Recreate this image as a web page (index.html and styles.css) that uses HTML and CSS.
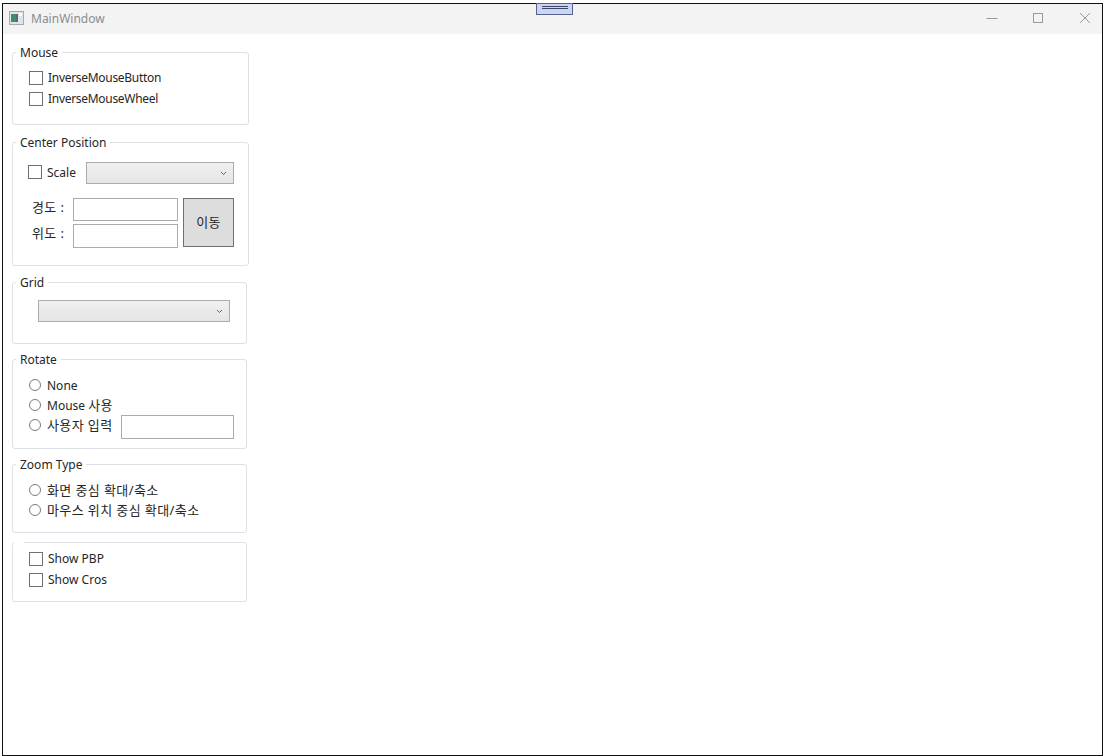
FILE: index.html
```html
<!DOCTYPE html>
<html lang="ko">
<head>
<meta charset="utf-8">
<title>MainWindow</title>
<link rel="stylesheet" href="styles.css">
</head>
<body>
<div class="window">
  <header class="titlebar">
    <svg class="app-icon" width="15" height="14" viewBox="0 0 15 14"><rect x="0.5" y="0.5" width="14" height="13" fill="#dfe5e8" stroke="#a3abae"/><rect x="2" y="3" width="5" height="8" fill="#3f8a70"/><rect x="7" y="3" width="2" height="8" fill="#5a6a70"/><rect x="10" y="2" width="3" height="3" fill="#fff"/></svg>
    <span class="title">MainWindow</span>
    <div class="controls">
      <svg class="ctl-min" width="12" height="12" viewBox="0 0 12 12"><path d="M0.5 6.5H11.5" stroke="#9a9a9a" fill="none"/></svg>
      <svg width="12" height="12" viewBox="0 0 12 12"><rect x="1.5" y="1.5" width="9" height="9" stroke="#9a9a9a" fill="none"/></svg>
      <svg width="12" height="12" viewBox="0 0 12 12"><path d="M1 1L11 11M11 1L1 11" stroke="#9a9a9a" fill="none"/></svg>
    </div>
  </header>
  <div class="debug-bar"><span></span><span></span></div>
  <main class="sidebar">
    <fieldset class="group g-mouse">
      <legend>Mouse</legend>
      <label class="row check-row tight"><span class="check"></span>InverseMouseButton</label>
      <label class="row check-row tight"><span class="check"></span>InverseMouseWheel</label>
    </fieldset>
    <fieldset class="group g-center">
      <legend>Center Position</legend>
      <div class="scale-row">
        <span class="check"></span><span class="scale-label">Scale</span>
        <div class="combo combo-scale"><svg width="7" height="5" viewBox="0 0 7 5"><path d="M1 1L3.5 3.5L6 1" stroke="#666" fill="none"/></svg></div>
      </div>
      <div class="coords">
        <span class="coord-label ko">경도 :</span><div class="field"></div>
        <button class="move ko">이동</button>
        <span class="coord-label ko">위도 :</span><div class="field"></div>
      </div>
    </fieldset>
    <fieldset class="group g-grid">
      <legend>Grid</legend>
      <div class="combo combo-grid"><svg width="7" height="5" viewBox="0 0 7 5"><path d="M1 1L3.5 3.5L6 1" stroke="#666" fill="none"/></svg></div>
    </fieldset>
    <fieldset class="group g-rotate">
      <legend>Rotate</legend>
      <label class="row"><span class="radio"></span><span>None</span></label>
      <label class="row"><span class="radio"></span><span class="lift">Mouse <span class="ko">사용</span></span></label>
      <label class="row"><span class="radio"></span><span class="ko lift">사용자 입력</span><div class="field field-rotate"></div></label>
    </fieldset>
    <fieldset class="group g-zoom">
      <legend>Zoom Type</legend>
      <label class="row"><span class="radio"></span><span class="ko lift">화면 중심 확대/축소</span></label>
      <label class="row"><span class="radio"></span><span class="ko lift">마우스 위치 중심 확대/축소</span></label>
    </fieldset>
    <fieldset class="group g-show">
      <legend></legend>
      <label class="row check-row"><span class="check"></span>Show PBP</label>
      <label class="row check-row"><span class="check"></span>Show Cros</label>
    </fieldset>
  </main>
</div>
</body>
</html>
```
FILE: styles.css
```css
* { box-sizing: border-box; }
html, body { margin: 0; height: 100%; background: #fff; overflow: hidden; }
body {
  padding: 3px 1px 0 2px;
  font-family: "Noto Sans", "Noto Sans CJK KR", sans-serif;
  font-size: 12px;
  color: #262626;
}
.window {
  position: relative;
  height: 753px;
  border: 1px solid #111;
  background: #fff;
}
.titlebar {
  display: flex;
  align-items: center;
  height: 30px;
  background: #f3f3f3;
  padding-left: 6px;
}
.app-icon { margin-right: 7px; margin-bottom: 2px; }
.title { color: #8c8c8c; padding-bottom: 2px; }
.controls {
  margin-left: auto;
  display: flex;
  gap: 35px;
  padding-right: 11px;
  padding-bottom: 3px;
}
.ctl-min { margin-right: -1px; }
.debug-bar {
  position: absolute;
  top: -1px;
  left: 533px;
  width: 37px;
  height: 12px;
  background: #c9d5f2;
  border: 1px solid #59618a;
  display: flex;
  flex-direction: column;
  align-items: center;
  gap: 1px;
  padding-top: 2px;
}
.debug-bar span { width: 26px; height: 1px; background: #3f4668; }
.sidebar {
  display: flex;
  flex-direction: column;
  align-items: flex-start;
  padding: 10px 0 0 9px;
}
.group {
  --pad: 16px;
  margin: 0;
  padding: 0 12px 0 var(--pad);
  border: 1px solid #dde0e4;
  border-radius: 3px;
  width: 235px;
  min-width: 0;
}
.group legend {
  margin-left: calc(3px - var(--pad));
  padding: 2px 4px 0;
  line-height: 14px;
}
.g-mouse { width: 237px; height: 81px; padding-top: 8px; }
.g-center { --pad: 15px; width: 237px; height: 132px; margin-top: 9px; padding-top: 12px; padding-right: 14px; }
.g-grid { --pad: 25px; height: 70px; margin-top: 8px; padding-top: 10px; padding-right: 16px; }
.g-rotate { height: 98px; margin-top: 7px; padding-top: 8px; }
.g-zoom { height: 77px; margin-top: 7px; padding-top: 8px; }
.g-show { height: 60px; margin-top: 9px; padding-top: 6px; }
.g-show legend { height: 0; padding: 0 5.5px; margin-left: calc(0px - var(--pad)); }
.ko { font-size: 13px; letter-spacing: 0.4px; }
.tight { letter-spacing: -0.3px; }
.lift { padding-bottom: 2px; }
.row {
  display: flex;
  align-items: center;
  height: 20px;
}
.check-row { padding-bottom: 2px; }
.check-row + .check-row { margin-top: 1px; }
.check {
  flex: none;
  width: 14px;
  height: 14px;
  border: 1px solid #707070;
  background: #fff;
  margin-right: 5px;
}
.check-row .check { margin-bottom: -2px; }
.radio {
  flex: none;
  width: 12px;
  height: 12px;
  border: 1px solid #7a7a7a;
  border-radius: 50%;
  background: #fff;
  margin-right: 6px;
}
.scale-row { display: flex; align-items: center; height: 22px; }
.scale-row .check, .scale-label { margin-bottom: 2px; }
.scale-label { width: 39px; }
.combo {
  height: 22px;
  border: 1px solid #acacac;
  background: linear-gradient(#f0f0f0, #e5e5e5);
  display: flex;
  align-items: center;
  justify-content: flex-end;
  padding-right: 6px;
}
.combo-scale { width: 148px; }
.combo-grid { width: 192px; }
.coords {
  display: grid;
  grid-template-columns: 45px 105px 56px;
  grid-template-rows: 23px 24px;
  row-gap: 3px;
  margin-top: 14px;
}
.coord-label { padding-left: 4px; align-self: center; padding-bottom: 7px; }
.field { border: 1px solid #acacac; background: #fff; }
.move {
  grid-column: 3;
  grid-row: 1 / span 2;
  margin: 0 0 1px 5px;
  padding: 0 0 2px;
  border: 1px solid #707070;
  background: #dddddd;
  font-family: inherit;
  color: inherit;
}
.field-rotate {
  flex: none;
  width: 113px;
  height: 24px;
  margin-left: auto;
  align-self: flex-start;
}
```
